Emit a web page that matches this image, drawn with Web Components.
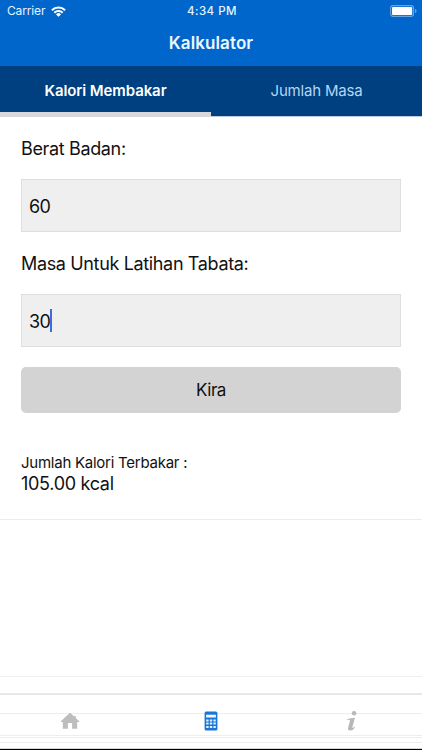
<!DOCTYPE html>
<html lang="ms">
<head>
<meta charset="utf-8">
<title>Kalkulator</title>
<style>
html,body{margin:0;height:750px;overflow:hidden;background:#fff;color:#111;font-family:Inter,"Liberation Sans",sans-serif}
</style>
</head>
<body>
<calc-app></calc-app>
<script>
const define = (name, html) => {
  const template = document.createElement('template');
  template.innerHTML = html;
  customElements.define(name, class extends HTMLElement {
    constructor() {
      super();
      this.attachShadow({mode: 'open'}).append(template.content.cloneNode(true));
    }
  });
};

define('status-bar', `
<style>
:host{display:grid;grid-template-columns:1fr auto 1fr;align-items:center;height:22px;padding:0 5px 0 7px;color:#e6f4ff;font-size:12px;line-height:22px;box-sizing:border-box}
.left{display:flex;align-items:center;gap:6px;letter-spacing:-.15px}
.time{font-weight:500;font-size:11.5px;letter-spacing:.5px}
.right{display:flex;justify-content:flex-end}
svg{display:block}
</style>
<div class="left"><span>Carrier</span>
<svg width="15" height="11" viewBox="0 0 15 11" fill="none" stroke="#fff" stroke-width="2"><path d="M.9 4.2a9.3 9.3 0 0 1 13.2 0M3.3 6.7a5.9 5.9 0 0 1 8.4 0"/><path d="M7.5 10.8 5 8.4a3.5 3.5 0 0 1 5 0z" fill="#fff" stroke="none"/></svg></div>
<span class="time">4:34 PM</span>
<div class="right"><svg width="27" height="12" viewBox="0 0 27 12"><rect x=".6" y=".6" width="23" height="10.8" rx="2.6" fill="none" stroke="#66a3e0" stroke-width="1.1"/><rect x="2" y="2" width="20.2" height="8" rx="1" fill="#fff"/><path d="M25 4c2 .6 2 3.4 0 4z" fill="#66a3e0"/></svg></div>`);

define('title-bar', `
<style>:host{display:block;height:43px;line-height:43px;text-align:center;color:#edf7ff;font-size:17px;font-weight:600;letter-spacing:.1px}</style><slot></slot>`);

define('tab-item', `
<style>
:host{display:block;flex:1;height:51px;box-sizing:border-box;line-height:49px;text-align:center;font-size:15px;color:#b5d5f2;border-bottom:1px solid #b9cbe0;letter-spacing:-.2px}
:host([selected]){color:#fff;font-weight:600;border-bottom:5px solid #d8d8dc;letter-spacing:-.1px}
</style><slot></slot>`);

define('tab-strip', `
<style>:host{display:flex;background:#004080;border-top:1px solid #1762ac;height:51px}</style><slot></slot>`);

define('form-field', `
<style>
:host{display:block}
.label{font-size:18px;line-height:24px;letter-spacing:-.35px}
.box{display:flex;align-items:center;height:53px;box-sizing:border-box;margin-top:18px;padding:1px 7px 0;border:1px solid #dedede;background:#efefef;font-size:18px;letter-spacing:-.6px}
.caret{display:none;width:2px;height:23px;margin-top:-1px;background:#4169e1}
:host([focused]) .caret{display:block}
</style><div class="label"><slot name="label"></slot></div><div class="box"><slot></slot><i class="caret"></i></div>`);

define('calc-button', `
<style>:host{display:block;height:46px;border-radius:5px;background:#d3d3d3;text-align:center;font-size:17px;line-height:46px;letter-spacing:-.5px}</style><slot></slot>`);

define('calorie-result', `
<style>:host{display:block}.name{font-size:15px;line-height:20px;letter-spacing:-.25px}.value{font-size:18px;line-height:21px;letter-spacing:-.3px}</style>
<div class="name"><slot name="name"></slot></div><div class="value"><slot></slot></div>`);

define('bottom-nav', `
<style>
:host{display:grid;grid-template-columns:repeat(3,1fr);justify-items:center;height:57px;box-sizing:border-box;border-top:2px solid #e8e8e8;border-bottom:1px solid #000;padding-top:17px;
background:linear-gradient(#ededed,#ededed) 0 18px/100% 1px no-repeat,linear-gradient(#eeeef2,#eeeef2) 0 40px/100% 1px no-repeat,linear-gradient(#eeeef2,#eeeef2) 0 42px/100% 1px no-repeat,linear-gradient(#eeeeee,#eeeeee) 0 47px/100% 1px no-repeat,linear-gradient(#d8d8dc,#d8d8dc) 0 53px/100% 1px no-repeat,#fff}
svg{display:block;overflow:visible}
</style>
<svg width="20" height="20" viewBox="0 0 20 20" fill="#bdbdbd"><path d="M10 .8.8 9.2v.7h2v6.9h5.1v-5.7h4.2v5.7h5.1V9.9h2v-.7l-3.4-3.1V4h-1.6v.6z"/></svg>
<svg width="14" height="20" viewBox="0 .5 14 20"><rect x=".6" y=".1" width="12.8" height="18.8" rx="1.5" fill="#1976d8"/><path d="M2.1 3.2h9.8V6H2.1z" fill="#eff9ff"/><g fill="#dff3ff"><path d="M2.2 8h2.4v2H2.2zM5.8 8h2.4v2H5.8zM9.4 8h2.4v2H9.4zM2.2 11.1h2.4v2H2.2zM5.8 11.1h2.4v2H5.8zM9.4 11.1h2.4v2H9.4zM2.2 14.4h2.4v2H2.2zM5.8 14.4h2.4v2H5.8zM9.4 14.4h2.4v2H9.4z"/></g></svg>
<svg width="12" height="21" viewBox="0 0 12 21" fill="#b8b8b8"><circle cx="8.1" cy="1.2" r="2.3"/><path d="M1 6.9C3.8 6.6 6.3 5.8 8.9 5.7L6.5 14.8c-.4 1.4.2 1.5 1.3.5l.7-.8.6.5c-1.3 2.3-2.8 3.6-4.8 3.6-2.1 0-2.7-1.2-2.2-3l1.7-6.1c.4-1.3.2-1.6-2.8-1.7z"/></svg>`);

define('calc-app', `
<style>
:host{display:flex;flex-direction:column;width:422px;height:750px;overflow:hidden}
header{background:#0066cc}
main{display:flex;flex-direction:column;flex:1}
.form{padding:20px 21px 0 21px}
form-field{margin-bottom:20px}
calc-button{margin-bottom:40px}
.row{height:403px;box-sizing:border-box;border-bottom:1px solid #ececec}
.empty{height:157px;box-sizing:border-box;border-bottom:1px solid #efefef}
</style>
<header><status-bar></status-bar><title-bar>Kalkulator</title-bar></header>
<tab-strip><tab-item selected>Kalori Membakar</tab-item><tab-item>Jumlah Masa</tab-item></tab-strip>
<main>
<section class="form row">
<form-field><span slot="label">Berat Badan:</span>60</form-field>
<form-field focused><span slot="label">Masa Untuk Latihan Tabata:</span>30</form-field>
<calc-button>Kira</calc-button>
<calorie-result><span slot="name">Jumlah Kalori Terbakar :</span>105.00 kcal</calorie-result>
</section>
<div class="empty"></div>
</main>
<bottom-nav></bottom-nav>`);
</script>
</body>
</html>
